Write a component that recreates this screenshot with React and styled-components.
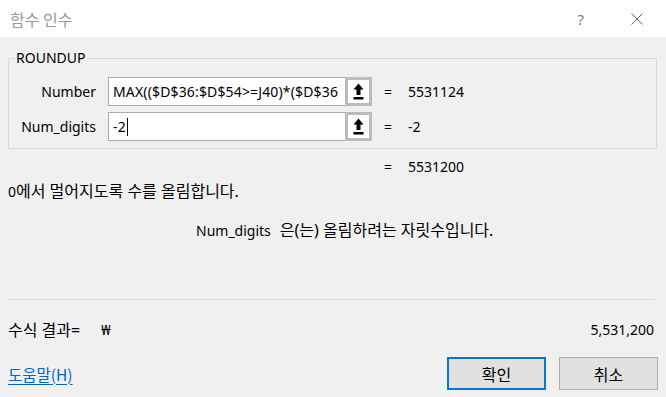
import React from "react";
import styled, { createGlobalStyle } from "styled-components";

const Global = createGlobalStyle`
  html, body { margin: 0; padding: 0; background: #f0f0f0; }
  body { font-family: "Noto Sans", "Noto Sans CJK KR", sans-serif; color: #000; }
  * { box-sizing: border-box; }
`;

const Window = styled.div`
  width: 666px;
  height: 397px;
  display: flex;
  flex-direction: column;
  background: #f0f0f0;
  overflow: hidden;
`;

const TitleBar = styled.div`
  height: 37px;
  background: #fff;
  display: flex;
  align-items: center;
  padding-left: 10px;
  flex-shrink: 0;
`;

const Title = styled.div`
  font-family: "Noto Sans CJK KR", sans-serif;
  font-size: 16px;
  color: #999;
  flex: 1;
  margin-top: 1px;
`;

const Help = styled.div`
  font-family: "Noto Sans", sans-serif;
  font-size: 15px;
  color: #7a7a7a;
  margin-right: 47px;
  margin-top: 1px;
`;

const CloseIcon = styled.svg`
  width: 12px;
  height: 12px;
  margin-right: 23px;
  margin-top: 1px;
`;

const Body = styled.div`
  flex: 1;
  display: flex;
  flex-direction: column;
  padding: 0 8px;
`;

const Group = styled.fieldset`
  margin: 11px 1px 0 0;
  padding: 9px 0 7px 0;
  border: 1px solid #d9d9d9;
  min-width: 0;
`;

const Legend = styled.legend`
  margin-left: 6px;
  padding: 0 2px 0 1px;
  font-size: 14px;
  line-height: 20px;
`;

const ArgRows = styled.div`
  display: flex;
  flex-direction: column;
  gap: 6px;
`;

const ArgRow = styled.div`
  display: flex;
  align-items: center;
  height: 29px;
`;

const ArgLabel = styled.div`
  width: 87px;
  text-align: right;
  font-size: 14px;
  margin-right: 12px;
`;

const InputBox = styled.div`
  width: 237px;
  height: 29px;
  background: #fff;
  border: 1px solid #ababab;
  border-right: none;
  padding-left: 4px;
  display: flex;
  align-items: center;
  overflow: hidden;
  white-space: nowrap;
  font-size: 14px;
  letter-spacing: 0.15px;
`;

const Caret = styled.span`
  display: inline-block;
  width: 1px;
  height: 18px;
  background: #000;
  margin-left: 1px;
`;

const RefButton = styled.div`
  width: 27px;
  height: 29px;
  flex-shrink: 0;
  border: 3px solid #bcbcbc;
  background: #fff;
  display: flex;
  align-items: center;
  justify-content: center;
`;

const Equals = styled.span`
  width: 24px;
  margin-left: ${(p) => (p.$flush ? "0" : "12px")};
  font-size: 14px;
`;

const Value = styled.span`
  font-size: 14px;
`;

const ResultLine = styled.div`
  margin-top: 8px;
  height: 20px;
  line-height: 20px;
  padding-left: 376px;
  display: flex;
`;

const Description = styled.div`
  margin-top: 4px;
  line-height: 20px;
  font-size: 16px;
`;

const Latin = styled.span`
  font-family: "Noto Sans", sans-serif;
  font-size: 14px;
`;

const ArgName = styled(Latin)`
  margin-right: 9px;
`;

const ArgHelp = styled.div`
  margin-top: 18px;
  line-height: 20px;
  padding-left: 188px;
  font-size: 16px;
`;

const Separator = styled.div`
  margin-top: 58px;
  margin-right: 3px;
  height: 1px;
  background: #dadada;
`;

const FormulaRow = styled.div`
  margin-top: 20px;
  height: 20px;
  line-height: 20px;
  display: flex;
  align-items: center;
  font-size: 16px;
`;

const Currency = styled.span`
  margin-left: 21px;
  font-size: 14px;
  flex: 1;
`;

const Amount = styled.span`
  font-size: 14px;
  margin-right: 4px;
`;

const Footer = styled.div`
  margin-top: 17px;
  display: flex;
  align-items: center;
`;

const HelpLink = styled.a`
  font-family: "Noto Sans CJK KR", sans-serif;
  font-size: 15.5px;
  color: #0066cc;
  text-decoration: underline;
  text-underline-offset: 3px;
  flex: 1;
`;

const Button = styled.button`
  width: 99px;
  height: 33px;
  margin-left: ${(p) => (p.$first ? "0" : "13px")};
  background: #e1e1e1;
  border: ${(p) => (p.$primary ? "2px solid #0078d7" : "1px solid #adadad")};
  font-family: "Noto Sans CJK KR", sans-serif;
  font-size: 16px;
  color: #000;
  padding: 0;
  display: flex;
  align-items: center;
  justify-content: center;
`;

const UpArrow = () => (
  <svg width="11" height="17" viewBox="0 0 11 17">
    <polygon points="5.5,0.5 10.5,6.5 7.5,6.5 7.5,12 3.5,12 3.5,6.5 0.5,6.5" fill="#000" />
    <rect x="0.5" y="14" width="10" height="2.5" fill="#000" />
  </svg>
);

export default function App() {
  return (
    <>
      <Global />
      <Window>
        <TitleBar>
          <Title>함수 인수</Title>
          <Help>?</Help>
          <CloseIcon viewBox="0 0 12 12">
            <path d="M0.5 0.5 L11.5 11.5 M11.5 0.5 L0.5 11.5" stroke="#666" strokeWidth="1" fill="none" />
          </CloseIcon>
        </TitleBar>
        <Body>
          <Group>
            <Legend>ROUNDUP</Legend>
            <ArgRows>
              <ArgRow>
                <ArgLabel>Number</ArgLabel>
                <InputBox>MAX(($D$36:$D$54&gt;=J40)*($D$36</InputBox>
                <RefButton>
                  <UpArrow />
                </RefButton>
                <Equals>=</Equals>
                <Value>5531124</Value>
              </ArgRow>
              <ArgRow>
                <ArgLabel>Num_digits</ArgLabel>
                <InputBox>
                  -2
                  <Caret />
                </InputBox>
                <RefButton>
                  <UpArrow />
                </RefButton>
                <Equals>=</Equals>
                <Value>-2</Value>
              </ArgRow>
            </ArgRows>
          </Group>
          <ResultLine>
            <Equals $flush>=</Equals>
            <Value>5531200</Value>
          </ResultLine>
          <Description>
            <Latin>0</Latin>에서 멀어지도록 수를 올림합니다.
          </Description>
          <ArgHelp>
            <ArgName>Num_digits</ArgName>은(는) 올림하려는 자릿수입니다.
          </ArgHelp>
          <Separator />
          <FormulaRow>
            수식 결과=
            <Currency>₩</Currency>
            <Amount>5,531,200</Amount>
          </FormulaRow>
          <Footer>
            <HelpLink>도움말(H)</HelpLink>
            <Button $primary $first>확인</Button>
            <Button>취소</Button>
          </Footer>
        </Body>
      </Window>
    </>
  );
}
